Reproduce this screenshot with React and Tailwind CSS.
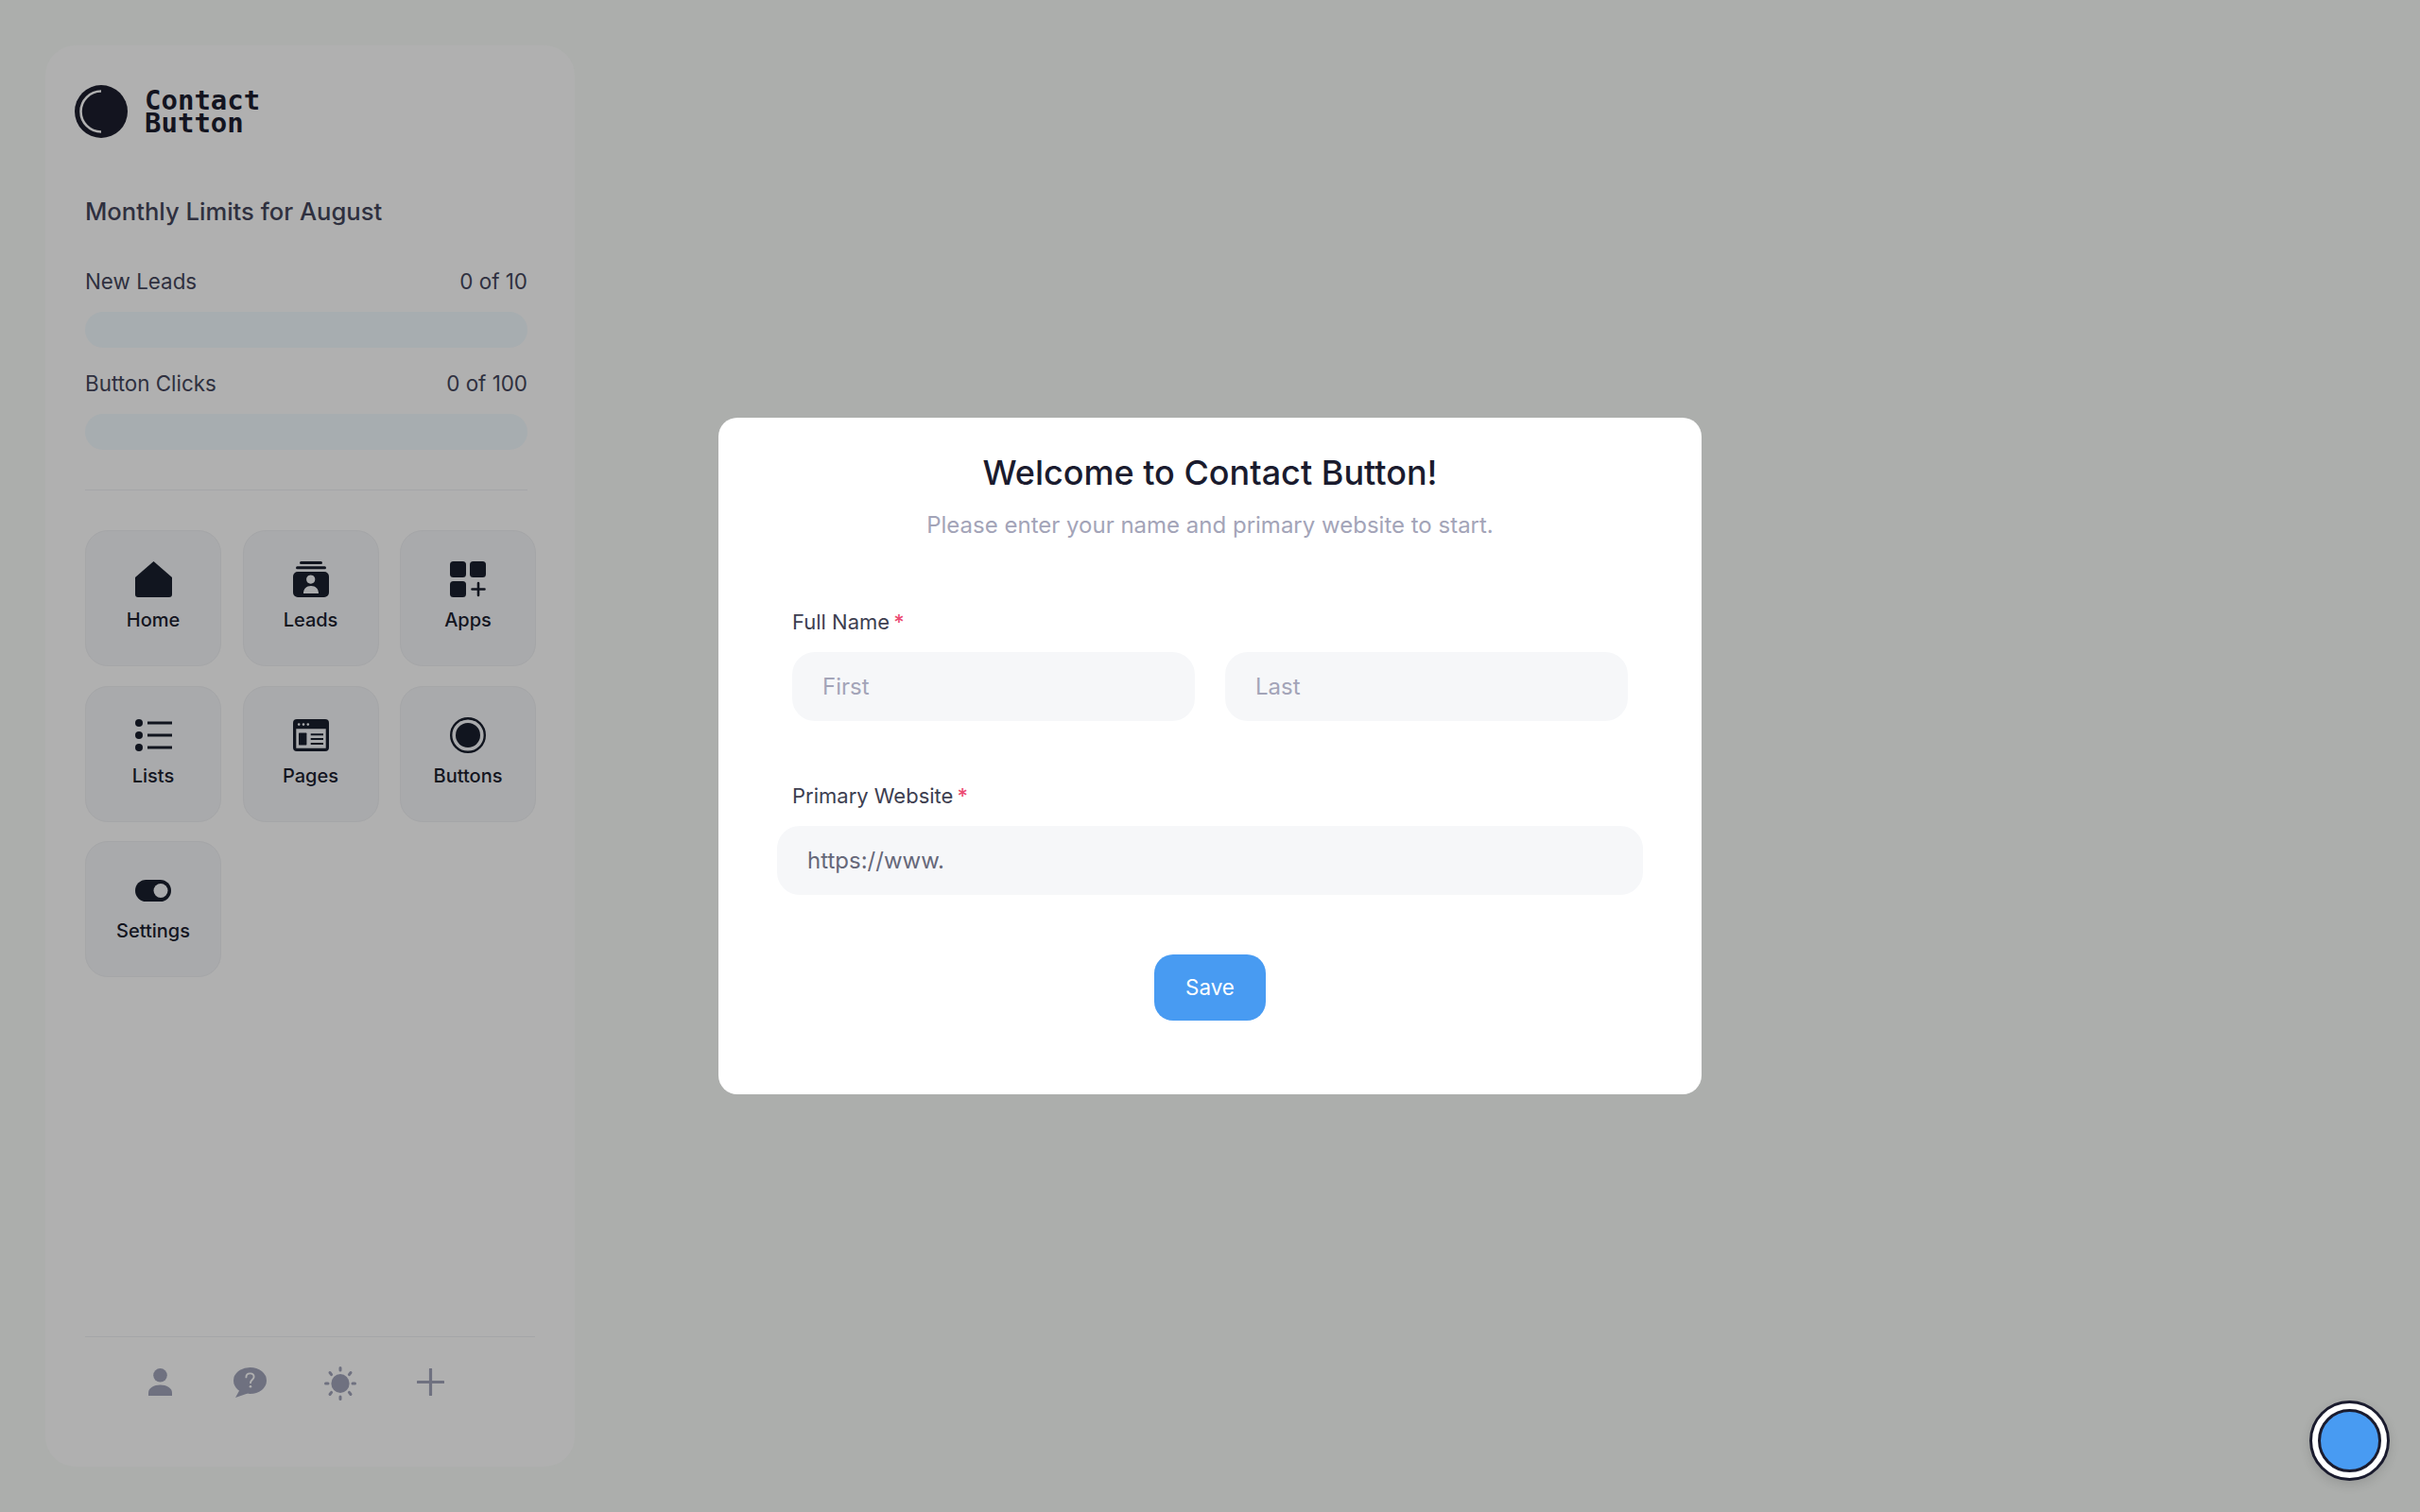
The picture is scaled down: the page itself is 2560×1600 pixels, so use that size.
import React from 'react';

const HomeIcon = () => (
  <svg width="39" height="38" viewBox="0 0 39 38" fill="#11151f">
    <path d="M19.5 0 L39 17 V35 a3 3 0 0 1 -3 3 H3 a3 3 0 0 1 -3 -3 V17 Z" />
  </svg>
);

const LeadsIcon = () => (
  <svg width="38" height="38" viewBox="0 0 38 38" fill="#11151f">
    <rect x="7" y="0" width="24" height="3" rx="1.5" />
    <rect x="3" y="5.2" width="32" height="3" rx="1.5" />
    <path
      fillRule="evenodd"
      d="M5 11 H33 a5 5 0 0 1 5 5 V33 a5 5 0 0 1 -5 5 H5 a5 5 0 0 1 -5 -5 V16 a5 5 0 0 1 5 -5 Z M18.7 14.5 a4.6 4.6 0 1 0 0.01 0 Z M11 34 H27 C27 29 24 26 19 26 S11 29 11 34 Z"
    />
  </svg>
);

const AppsIcon = () => (
  <svg width="38" height="38" viewBox="0 0 38 38" fill="#11151f">
    <rect x="0" y="0" width="17" height="17" rx="3.5" />
    <rect x="21" y="0" width="17" height="17" rx="3.5" />
    <rect x="0" y="21" width="17" height="17" rx="3.5" />
    <path d="M30 23 V36 M23.5 29.5 H36.5" stroke="#11151f" strokeWidth="2.6" strokeLinecap="round" fill="none" />
  </svg>
);

const ListsIcon = () => (
  <svg width="39" height="34" viewBox="0 0 39 34" fill="#11151f">
    <circle cx="4" cy="4" r="4" />
    <circle cx="4" cy="17" r="4" />
    <circle cx="4" cy="30" r="4" />
    <path d="M13 4 H39 M13 17 H39 M13 30 H39" stroke="#11151f" strokeWidth="3" fill="none" />
  </svg>
);

const PagesIcon = () => (
  <svg width="38" height="34" viewBox="0 0 38 34" fill="#11151f">
    <path
      fillRule="evenodd"
      d="M4 0 H34 a4 4 0 0 1 4 4 V30 a4 4 0 0 1 -4 4 H4 a4 4 0 0 1 -4 -4 V4 a4 4 0 0 1 4 -4 Z M3.3 10.3 V30.7 H34.7 V10.3 Z"
    />
    <circle cx="6.2" cy="5.6" r="1.3" fill="#a9aaac" />
    <circle cx="11" cy="5.6" r="1.3" fill="#a9aaac" />
    <circle cx="15.8" cy="5.6" r="1.3" fill="#a9aaac" />
    <rect x="6" y="14.6" width="8.4" height="12.8" rx="0.6" />
    <path d="M18.7 16.3 H32 M18.7 21 H32 M18.7 26 H32" stroke="#11151f" strokeWidth="2" fill="none" />
  </svg>
);

const ButtonsIcon = () => (
  <svg width="38" height="38" viewBox="0 0 38 38" fill="#11151f">
    <circle cx="19" cy="19" r="17.8" fill="none" stroke="#11151f" strokeWidth="2.4" />
    <circle cx="19" cy="19" r="13" />
  </svg>
);

const SettingsIcon = () => (
  <svg width="38" height="23" viewBox="0 0 38 23" fill="#11151f">
    <rect x="0" y="0" width="38" height="23" rx="11.5" />
    <circle cx="27" cy="11.5" r="7.5" fill="#a9aaac" />
  </svg>
);

const PersonIcon = () => (
  <svg width="25" height="29" viewBox="0 0 25 29" fill="#6f7180">
    <circle cx="12.5" cy="7.3" r="7.3" />
    <path d="M0 29 V26 C0 20.5 6 17.5 12.5 17.5 S25 20.5 25 26 V29 Z" />
  </svg>
);

const HelpIcon = () => (
  <svg width="35" height="32" viewBox="0 0 35 32" fill="#6f7180">
    <ellipse cx="17.5" cy="14" rx="17.5" ry="14" />
    <path d="M7 23 L2 32 L15 27.5 Z" />
    <path d="M13.4 10.4 C13.4 7.8 15.2 6.4 17.6 6.4 C20 6.4 21.6 7.9 21.6 10 C21.6 12.8 18 13.2 18 16.2" fill="none" stroke="#b0b0b0" strokeWidth="1.9" strokeLinecap="round" />
    <circle cx="18" cy="20.2" r="1.3" fill="#b0b0b0" />
  </svg>
);

const SunIcon = () => (
  <svg width="34" height="36" viewBox="0 0 34 36" fill="#6f7180">
    <ellipse cx="17" cy="18" rx="9.6" ry="10" />
    <path
      d="M17 1.5 V4 M17 32 V34.5 M1.5 18 H4 M30 18 H32.5 M6 6.5 L7.6 8.6 M28 6.5 L26.4 8.6 M6 29.5 L7.6 27.4 M28 29.5 L26.4 27.4"
      stroke="#6f7180"
      strokeWidth="3"
      strokeLinecap="round"
      fill="none"
    />
  </svg>
);

const PlusIcon = () => (
  <svg width="29" height="29" viewBox="0 0 29 29">
    <path d="M14.5 1 V28 M1 14.5 H28" stroke="#6f7180" strokeWidth="3.2" strokeLinecap="round" fill="none" />
  </svg>
);

const LogoIcon = () => (
  <svg width="56" height="56" viewBox="0 0 56 56">
    <circle cx="28" cy="28" r="28" fill="#13141f" />
    <path d="M28 6.5 A21.5 21.5 0 0 0 28 49.5" fill="none" stroke="#b0b0b0" strokeWidth="2.6" />
  </svg>
);

const tiles = [
  { label: 'Home', icon: <HomeIcon /> },
  { label: 'Leads', icon: <LeadsIcon /> },
  { label: 'Apps', icon: <AppsIcon /> },
  { label: 'Lists', icon: <ListsIcon /> },
  { label: 'Pages', icon: <PagesIcon /> },
  { label: 'Buttons', icon: <ButtonsIcon /> },
  { label: 'Settings', icon: <SettingsIcon /> },
];

const limits = [
  { label: 'New Leads', value: '0 of 10' },
  { label: 'Button Clicks', value: '0 of 100' },
];

function Sidebar() {
  return (
    <aside className="w-[560px] h-[1504px] rounded-[32px] bg-[#b0b0b0] flex flex-col pt-[42px]">
      <div className="flex items-center gap-[18px] pl-[31px]">
        <LogoIcon />
        <div className="font-['DejaVu_Sans_Mono',monospace] font-bold text-[29px] leading-[24px] text-[#13141f]">
          <div>Contact</div>
          <div>Button</div>
        </div>
      </div>

      <div className="px-[42px]">
        <h2 className="mt-[60px] text-[25.6px] leading-[36px] font-medium text-[#2f303f]">Monthly Limits for August</h2>
        <div className="mt-[40px] w-[468px] flex flex-col gap-[22px]">
          {limits.map((item) => (
            <div key={item.label}>
              <div className="flex justify-between text-[22.4px] leading-[32px] text-[#2f303f]">
                <span>{item.label}</span>
                <span>{item.value}</span>
              </div>
              <div className="mt-[16px] h-[38px] rounded-full bg-[#a7adb0]" />
            </div>
          ))}
        </div>
        <div className="mt-[42px] w-[468px] h-px bg-[#a5a6a8]" />
        <div className="mt-[42px] grid grid-cols-[144px_144px_144px] gap-x-[22.5px] gap-y-[20.5px]">
          {tiles.map((tile) => (
            <div key={tile.label} className="h-[144px] rounded-[24px] bg-[#a9aaac] border border-[#a5a6a8] flex flex-col items-center pt-[32px]">
              <div className="h-[38px] flex items-center justify-center">{tile.icon}</div>
              <span className="mt-[10px] text-[20px] leading-[28px] font-medium text-[#13151f]">{tile.label}</span>
            </div>
          ))}
        </div>
      </div>

      <div className="mt-auto ml-[42px] w-[476px] h-[138px] border-t border-[#a5a6a8] flex items-start pt-[32px]">
        <div className="ml-[67px] mt-[1px]"><PersonIcon /></div>
        <div className="ml-[65px]"><HelpIcon /></div>
        <div className="ml-[61px] -mt-[1px]"><SunIcon /></div>
        <div className="ml-[64px] mt-[1px]"><PlusIcon /></div>
      </div>
    </aside>
  );
}

function Modal() {
  return (
    <div className="fixed inset-0 flex items-center justify-center">
      <div className="w-[1040px] h-[716px] rounded-[20px] bg-white flex flex-col items-center pt-[34px]">
        <h1 className="text-[36px] leading-[48px] font-[550] text-[#1a1b2e]">Welcome to Contact Button!</h1>
        <p className="mt-[16px] text-[24px] leading-[32px] text-[#a3a4b8]">Please enter your name and primary website to start.</p>

        <div className="mt-[72px] w-[916px]">
          <label className="ml-[16px] block text-[22px] leading-[28px] text-[#3d3e50]">
            Full Name<span className="ml-[4px] font-medium text-[#ec4a72]">*</span>
          </label>
          <div className="mt-[18px] ml-[16px] flex gap-[32px]">
            <input
              placeholder="First"
              className="w-[426px] h-[73px] rounded-[24px] bg-[#f6f7f9] px-[32px] text-[24px] outline-none placeholder:text-[#a3a4b8]"
            />
            <input
              placeholder="Last"
              className="w-[426px] h-[73px] rounded-[24px] bg-[#f6f7f9] px-[32px] text-[24px] outline-none placeholder:text-[#a3a4b8]"
            />
          </div>

          <label className="mt-[65px] ml-[16px] block text-[22px] leading-[28px] text-[#3d3e50]">
            Primary Website<span className="ml-[4px] font-medium text-[#ec4a72]">*</span>
          </label>
          <input
            defaultValue="https://www."
            className="mt-[18px] w-[916px] h-[73px] rounded-[24px] bg-[#f6f7f9] px-[32px] text-[24px] text-[#666879] outline-none"
          />
        </div>

        <button className="mt-[63px] w-[118px] h-[70px] rounded-[20px] bg-[#489bf2] text-white text-[22.4px]">Save</button>
      </div>
    </div>
  );
}

export default function App() {
  return (
    <div className="min-h-screen bg-[#acaeac] p-[48px] font-['Inter',sans-serif]">
      <Sidebar />
      <Modal />
      <div className="fixed right-[32px] bottom-[33px] w-[85px] h-[85px] rounded-full bg-white border-[3px] border-[#1a1b2e] flex items-center justify-center shadow-[0_4px_12px_rgba(0,0,0,0.12)]">
        <div className="w-[67px] h-[67px] rounded-full bg-[#489bf2] border-[3px] border-[#1a1b2e]" />
      </div>
    </div>
  );
}
